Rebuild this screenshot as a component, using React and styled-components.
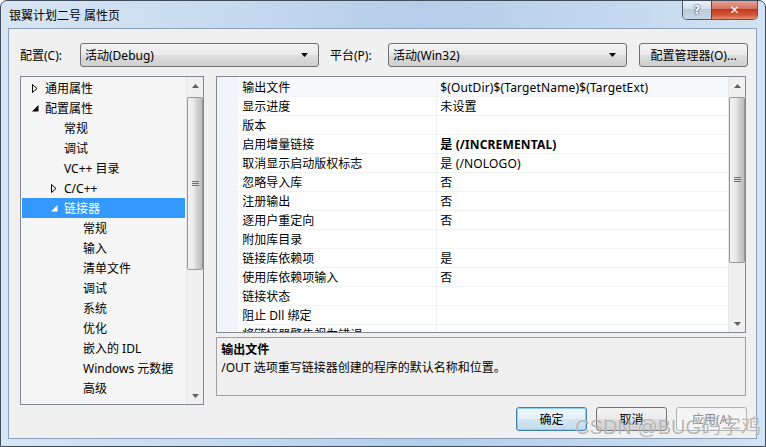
import React from 'react';
import styled, { createGlobalStyle, css } from 'styled-components';

const GlobalStyle = createGlobalStyle`
  html, body {
    margin: 0;
    padding: 0;
    background: #ffffff;
  }
  * {
    box-sizing: border-box;
  }
`;

const uiFont = `"Segoe UI", "Noto Sans", "Noto Sans CJK SC", sans-serif`;

const Window = styled.div`
  position: relative;
  width: 766px;
  height: 447px;
  display: flex;
  flex-direction: column;
  padding: 0 8px 7px 7px;
  border: 1px solid #3e4c5c;
  border-radius: 7px 7px 0 0;
  background: linear-gradient(to right, #d8e5f3 0%, #c6daef 30%, #b5cde8 55%, #c3d8ee 80%, #d3e3f3 100%);
  font-family: ${uiFont};
  font-size: 12px;
  color: #000;
  overflow: hidden;
`;

const TitleBar = styled.div`
  height: 27px;
  display: flex;
  align-items: flex-start;
`;

const Title = styled.div`
  padding: 5px 0 0 1px;
  font-size: 12px;
  color: #000;
  flex: 1;
`;

const CaptionButtons = styled.div`
  display: flex;
  margin-right: -1px;
  margin-top: -1px;
  border: 1px solid #4b5a6b;
  border-top: none;
  border-radius: 0 0 5px 5px;
  overflow: hidden;
  height: 20px;
`;

const CaptionButton = styled.div`
  width: ${({ $w }) => $w}px;
  height: 19px;
  display: flex;
  align-items: center;
  justify-content: center;
  color: #fff;
  font-family: "DejaVu Sans", sans-serif;
  font-weight: bold;
  font-size: 12px;
  ${({ $close }) =>
    $close
      ? css`
          background: linear-gradient(to bottom, #e9a99b 0%, #d4735f 45%, #c23a1f 50%, #d25a3c 80%, #e58f6c 100%);
          border-left: 1px solid #7a3b31;
        `
      : css`
          background: linear-gradient(to bottom, #eef3f8 0%, #d6e0ea 45%, #bccbdb 50%, #c8d6e4 100%);
          color: #fff;
          text-shadow: 0 0 2px #2c3f55, 0 0 1px #2c3f55;
        `}
`;

const Client = styled.div`
  flex: 1;
  background: #f0f0f0;
  border: 1px solid #8aa2bd;
  display: flex;
  flex-direction: column;
  padding: 14px 10px 0 11px;
`;

const TopRow = styled.div`
  display: flex;
  align-items: center;
  height: 24px;
`;

const Label = styled.div`
  width: ${({ $w }) => $w}px;
  flex-shrink: 0;
`;

const Combo = styled.div`
  width: ${({ $w }) => $w}px;
  height: 24px;
  border: 1px solid #707070;
  border-radius: 3px;
  background: linear-gradient(to bottom, #f2f2f2 0%, #ebebeb 50%, #dddddd 51%, #cfcfcf 100%);
  display: flex;
  align-items: center;
  padding: 0 9px 0 4px;
  flex-shrink: 0;
`;

const ComboText = styled.div`
  flex: 1;
`;

const Gap = styled.div`
  width: ${({ $w }) => $w}px;
  flex-shrink: 0;
`;

const Button = styled.div`
  width: ${({ $w }) => $w}px;
  height: 24px;
  border: 1px solid #707070;
  border-radius: 3px;
  background: linear-gradient(to bottom, #f2f2f2 0%, #ebebeb 50%, #dddddd 51%, #cfcfcf 100%);
  display: flex;
  align-items: center;
  justify-content: center;
  flex-shrink: 0;
  ${({ $focus }) =>
    $focus &&
    css`
      border-color: #3c7fb1;
      box-shadow: inset 0 0 0 1px #8ed0f6;
      background: linear-gradient(to bottom, #eef7fc 0%, #e3f0f8 50%, #d2e6f2 51%, #c3dcea 100%);
    `}
  ${({ $disabled }) =>
    $disabled &&
    css`
      border-color: #adb2b5;
      background: #f4f4f4;
      color: #838383;
    `}
`;

const Main = styled.div`
  margin-top: 9px;
  display: flex;
  gap: 12px;
  height: 329px;
`;

const Tree = styled.div`
  width: 185px;
  height: 329px;
  border: 1px solid #828790;
  background: #f5f5f5;
  display: flex;
`;

const TreeList = styled.div`
  flex: 1;
  padding: 1px 1px 0 1px;
  overflow: hidden;
`;

const TreeRow = styled.div`
  height: 20px;
  display: flex;
  align-items: center;
  padding-left: ${({ $level }) => 10 + $level * 19}px;
  background: ${({ $selected }) => ($selected ? '#3399ff' : 'transparent')};
  color: ${({ $selected }) => ($selected ? '#ffffff' : '#000')};
  white-space: nowrap;
`;

const Expander = styled.div`
  width: 13px;
  height: 20px;
  display: flex;
  align-items: center;
  justify-content: flex-start;
  flex-shrink: 0;
`;

const ScrollBar = styled.div`
  width: 17px;
  background: #f0f0f0;
  border-left: 1px solid #e6e6e6;
  display: flex;
  flex-direction: column;
  align-items: center;
  flex-shrink: 0;
`;

const ScrollArrow = styled.div`
  height: 17px;
  width: 100%;
  display: flex;
  align-items: center;
  justify-content: center;
  flex-shrink: 0;
`;

const ScrollTrack = styled.div`
  flex: 1;
  width: 100%;
  position: relative;
`;

const Thumb = styled.div`
  position: absolute;
  left: 0;
  width: 16px;
  top: ${({ $top }) => $top}px;
  height: ${({ $h }) => $h}px;
  border: 1px solid #979797;
  border-radius: 2px;
  background: linear-gradient(to right, #f3f3f3 0%, #e8e8e8 45%, #d8d8d8 55%, #bcbcbc 100%);
  display: flex;
  align-items: center;
  justify-content: center;
`;

const Right = styled.div`
  width: 532px;
  display: flex;
  flex-direction: column;
  gap: 4px;
`;

const Grid = styled.div`
  height: 257px;
  border: 1px solid #828790;
  background: #ffffff;
  display: flex;
`;

const GridBody = styled.div`
  flex: 1;
  display: flex;
  overflow: hidden;
`;

const GridMargin = styled.div`
  width: 21px;
  background: #f1f4f9;
  flex-shrink: 0;
`;

const GridRows = styled.div`
  flex: 1;
  padding-top: 1px;
`;

const GridRow = styled.div`
  height: 19px;
  display: flex;
  border-bottom: 1px solid #f0f2f6;
  background: ${({ $first }) => ($first ? '#f7f9fc' : '#ffffff')};
`;

const NameCell = styled.div`
  width: 199px;
  padding-left: 4px;
  display: flex;
  align-items: center;
  border-right: 1px solid #f0f2f6;
  white-space: nowrap;
  flex-shrink: 0;
`;

const ValueCell = styled.div`
  flex: 1;
  padding-left: 3px;
  display: flex;
  align-items: center;
  white-space: nowrap;
  letter-spacing: 0.15px;
  font-weight: ${({ $bold }) => ($bold ? 700 : 400)};
`;

const Desc = styled.div`
  height: 59px;
  border: 1px solid #a0a0a0;
  background: #f0f0f0;
  padding: 2px 4px;
`;

const DescTitle = styled.div`
  font-weight: 700;
  line-height: 19px;
`;

const DescText = styled.div`
  line-height: 18px;
`;

const Footer = styled.div`
  display: flex;
  justify-content: flex-end;
  gap: 9px;
  margin-top: 2px;
  margin-right: -1px;
`;

const Watermark = styled.div`
  position: absolute;
  right: 4px;
  bottom: 6px;
  font-family: "Liberation Sans", "Noto Sans CJK SC", sans-serif;
  font-size: 20px;
  color: rgba(120, 120, 120, 0.55);
  text-shadow: 0 0 1px rgba(255, 255, 255, 0.9);
  pointer-events: none;
  white-space: nowrap;
`;

const DropArrow = () => (
  <svg width="8" height="5" viewBox="0 0 8 5">
    <path d="M0 0 H7 L3.5 4 Z" fill="#000" />
  </svg>
);

const Collapsed = ({ color }) => (
  <svg width="6" height="9" viewBox="0 0 6 9">
    <path d="M0.5 0.5 L5 4.5 L0.5 8.5 Z" fill="none" stroke={color} strokeWidth="1" />
  </svg>
);

const Expanded = ({ color }) => (
  <svg width="7" height="7" viewBox="0 0 7 7">
    <path d="M6.5 0 V6.5 H0 Z" fill={color} />
  </svg>
);

const UpArrow = () => (
  <svg width="7" height="4" viewBox="0 0 7 4">
    <path d="M0 4 H7 L3.5 0 Z" fill="#606060" />
  </svg>
);

const DownArrow = () => (
  <svg width="7" height="4" viewBox="0 0 7 4">
    <path d="M0 0 H7 L3.5 4 Z" fill="#606060" />
  </svg>
);

const Grip = () => (
  <svg width="7" height="6" viewBox="0 0 7 6">
    <path d="M0 0.5 H7 M0 2.5 H7 M0 4.5 H7" stroke="#707070" strokeWidth="1" />
  </svg>
);

const Scroll = ({ top, h }) => (
  <ScrollBar>
    <ScrollArrow>
      <UpArrow />
    </ScrollArrow>
    <ScrollTrack>
      <Thumb $top={top} $h={h}>
        <Grip />
      </Thumb>
    </ScrollTrack>
    <ScrollArrow>
      <DownArrow />
    </ScrollArrow>
  </ScrollBar>
);

const treeItems = [
  { label: '通用属性', level: 0, exp: 'c' },
  { label: '配置属性', level: 0, exp: 'e' },
  { label: '常规', level: 1 },
  { label: '调试', level: 1 },
  { label: 'VC++ 目录', level: 1 },
  { label: 'C/C++', level: 1, exp: 'c' },
  { label: '链接器', level: 1, exp: 'e', selected: true },
  { label: '常规', level: 2 },
  { label: '输入', level: 2 },
  { label: '清单文件', level: 2 },
  { label: '调试', level: 2 },
  { label: '系统', level: 2 },
  { label: '优化', level: 2 },
  { label: '嵌入的 IDL', level: 2 },
  { label: 'Windows 元数据', level: 2 },
  { label: '高级', level: 2 },
];

const props = [
  ['输出文件', '$(OutDir)$(TargetName)$(TargetExt)'],
  ['显示进度', '未设置'],
  ['版本', ''],
  ['启用增量链接', '是 (/INCREMENTAL)', true],
  ['取消显示启动版权标志', '是 (/NOLOGO)'],
  ['忽略导入库', '否'],
  ['注册输出', '否'],
  ['逐用户重定向', '否'],
  ['附加库目录', ''],
  ['链接库依赖项', '是'],
  ['使用库依赖项输入', '否'],
  ['链接状态', ''],
  ['阻止 Dll 绑定', ''],
  ['将链接器警告视为错误', ''],
];

export default function App() {
  return (
    <>
      <GlobalStyle />
      <Window>
        <TitleBar>
          <Title>银翼计划二号 属性页</Title>
          <CaptionButtons>
            <CaptionButton $w={28}>?</CaptionButton>
            <CaptionButton $w={46} $close>✕</CaptionButton>
          </CaptionButtons>
        </TitleBar>
        <Client>
          <TopRow>
            <Label $w={60}>配置(C):</Label>
            <Combo $w={239}>
              <ComboText>活动(Debug)</ComboText>
              <DropArrow />
            </Combo>
            <Gap $w={11} />
            <Label $w={58}>平台(P):</Label>
            <Combo $w={239}>
              <ComboText>活动(Win32)</ComboText>
              <DropArrow />
            </Combo>
            <Gap $w={12} />
            <Button $w={109}>配置管理器(O)...</Button>
          </TopRow>
          <Main>
            <Tree>
              <TreeList>
                {treeItems.map((it, i) => (
                  <TreeRow key={i} $level={it.level} $selected={it.selected}>
                    <Expander>
                      {it.exp === 'c' && <Collapsed color={it.selected ? '#fff' : '#000'} />}
                      {it.exp === 'e' && <Expanded color={it.selected ? '#fff' : '#000'} />}
                    </Expander>
                    {it.label}
                  </TreeRow>
                ))}
              </TreeList>
              <Scroll top={3} h={173} />
            </Tree>
            <Right>
              <Grid>
                <GridBody>
                  <GridMargin />
                  <GridRows>
                    {props.map(([n, v, b], i) => (
                      <GridRow key={i} $first={i === 0}>
                        <NameCell>{n}</NameCell>
                        <ValueCell $bold={b}>{v}</ValueCell>
                      </GridRow>
                    ))}
                  </GridRows>
                </GridBody>
                <Scroll top={3} h={166} />
              </Grid>
              <Desc>
                <DescTitle>输出文件</DescTitle>
                <DescText>/OUT 选项重写链接器创建的程序的默认名称和位置。</DescText>
              </Desc>
            </Right>
          </Main>
          <Footer>
            <Button $w={71} $focus>确定</Button>
            <Button $w={71}>取消</Button>
            <Button $w={71} $disabled>应用(A)</Button>
          </Footer>
        </Client>
        <Watermark>CSDN @BUG码字鸡</Watermark>
      </Window>
    </>
  );
}
